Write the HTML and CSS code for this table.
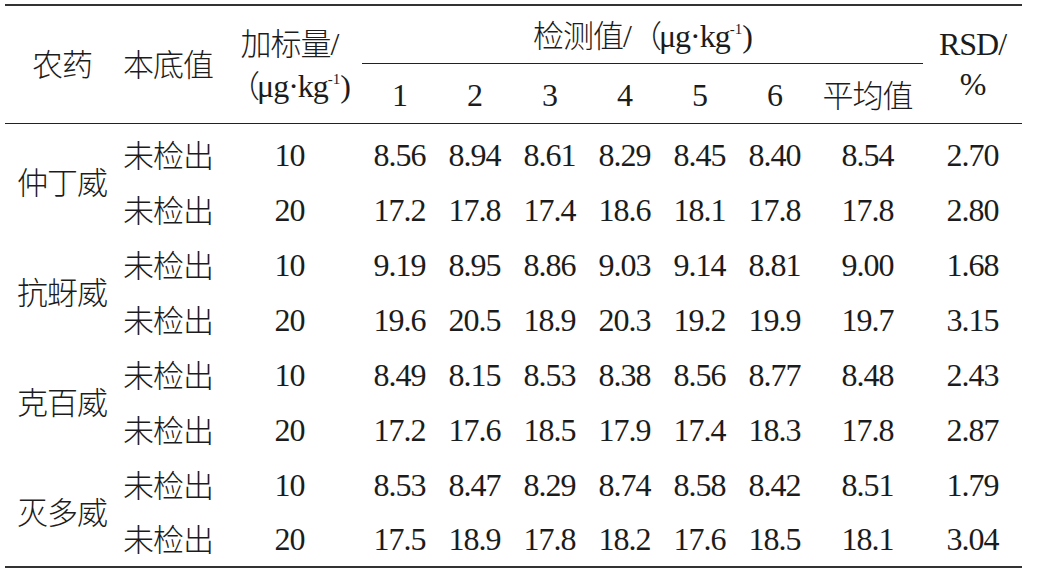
FILE: index.html
```html
<!DOCTYPE html>
<html lang="en">
<head>
    <meta charset="UTF-8">
    <title>农药加标回收</title>
    <link rel="stylesheet" href="styles.css">
</head>
<body>
    <table class="tbl">
        <colgroup>
            <col class="c-name">
            <col class="c-base">
            <col class="c-add">
            <col class="c-n"><col class="c-n"><col class="c-n">
            <col class="c-n"><col class="c-n"><col class="c-n">
            <col class="c-avg">
            <col class="c-rsd">
        </colgroup>
        <thead>
            <tr class="head1">
                <th rowspan="2"><span class="cn">农药</span></th>
                <th rowspan="2"><span class="cn">本底值</span></th>
                <th rowspan="2" class="two-line"><span class="cn">加标量</span>/<br><span class="cn paren">（</span>μg·kg<sup>-1</sup>)</th>
                <th colspan="7" class="group"><span class="cn">检测值</span>/<span class="cn paren">（</span>μg·kg<sup>-1</sup>)</th>
                <th rowspan="2" class="two-line rsd">RSD/<br>%</th>
            </tr>
            <tr class="head2">
                <th>1</th><th>2</th><th>3</th><th>4</th><th>5</th><th>6</th>
                <th><span class="cn">平均值</span></th>
            </tr>
        </thead>
        <tbody id="rows">
            <!-- строки добавляются скриптом ниже -->
        </tbody>
    </table>

    <script>
        // данные таблицы
        const data = [
            { name: "仲丁威", rows: [
                ["10", "8.56", "8.94", "8.61", "8.29", "8.45", "8.40", "8.54", "2.70"],
                ["20", "17.2", "17.8", "17.4", "18.6", "18.1", "17.8", "17.8", "2.80"]
            ]},
            { name: "抗蚜威", rows: [
                ["10", "9.19", "8.95", "8.86", "9.03", "9.14", "8.81", "9.00", "1.68"],
                ["20", "19.6", "20.5", "18.9", "20.3", "19.2", "19.9", "19.7", "3.15"]
            ]},
            { name: "克百威", rows: [
                ["10", "8.49", "8.15", "8.53", "8.38", "8.56", "8.77", "8.48", "2.43"],
                ["20", "17.2", "17.6", "18.5", "17.9", "17.4", "18.3", "17.8", "2.87"]
            ]},
            { name: "灭多威", rows: [
                ["10", "8.53", "8.47", "8.29", "8.74", "8.58", "8.42", "8.51", "1.79"],
                ["20", "17.5", "18.9", "17.8", "18.2", "17.6", "18.5", "18.1", "3.04"]
            ]}
        ];

        const tbody = document.getElementById('rows');
        data.forEach(item => {
            item.rows.forEach((vals, i) => {
                const tr = document.createElement('tr');
                if (i === 0) {
                    const name = document.createElement('td');
                    name.rowSpan = 2;
                    name.innerHTML = `<span class="cn">${item.name}</span>`;
                    tr.appendChild(name);
                }
                const base = document.createElement('td');
                base.innerHTML = '<span class="cn">未检出</span>';
                tr.appendChild(base);
                vals.forEach(v => {
                    const td = document.createElement('td');
                    td.className = 'num';
                    td.textContent = v;
                    tr.appendChild(td);
                });
                tbody.appendChild(tr);
            });
        });
    </script>
</body>
</html>
```

FILE: styles.css
```css
body {
    margin: 0;
    padding: 4px 0 0 5px;
    background-color: #ffffff;
}

.tbl {
    border-collapse: collapse;
    table-layout: fixed;
    width: 1017px;
    font-size: 32px;
    letter-spacing: -1px;
    color: #1c1c1c;
    border-top: 2.5px solid #333333;
    border-bottom: 2.5px solid #333333;
}

.cn {
    font-family: "Noto Sans CJK SC", sans-serif;
    font-weight: 300;
    font-size: 31px;
}

.c-name { width: 114px; }
.c-base { width: 98px; }
.c-add  { width: 145px; }
.c-n    { width: 75px; }
.c-avg  { width: 111px; }
.c-rsd  { width: 99px; }

.tbl th,
.tbl td {
    padding: 0;
    text-align: center;
    white-space: nowrap;
    font-weight: normal;
    line-height: 40px;
    font-family: "Liberation Serif", "DejaVu Serif", serif;
}

.head1 { height: 58px; }
.head2 { height: 60px; }

thead th {
    border-bottom: 1.5px solid #222222;
}

.head1 .group {
    border-bottom: 1.3px solid #222222;
    padding-top: 2px;
}

.head2 th {
    padding-top: 4px;
}

.rsd {
    line-height: 43px;
    padding-top: 2px;
}

.paren {
    letter-spacing: -3px;
}

sup {
    font-size: 15px;
    line-height: 0;
    vertical-align: 13px;
    letter-spacing: 0;
}

tbody tr {
    height: 55px;
}

tbody tr:first-child {
    height: 59px;
}

tbody tr:first-child td {
    padding-top: 4px;
}
```
